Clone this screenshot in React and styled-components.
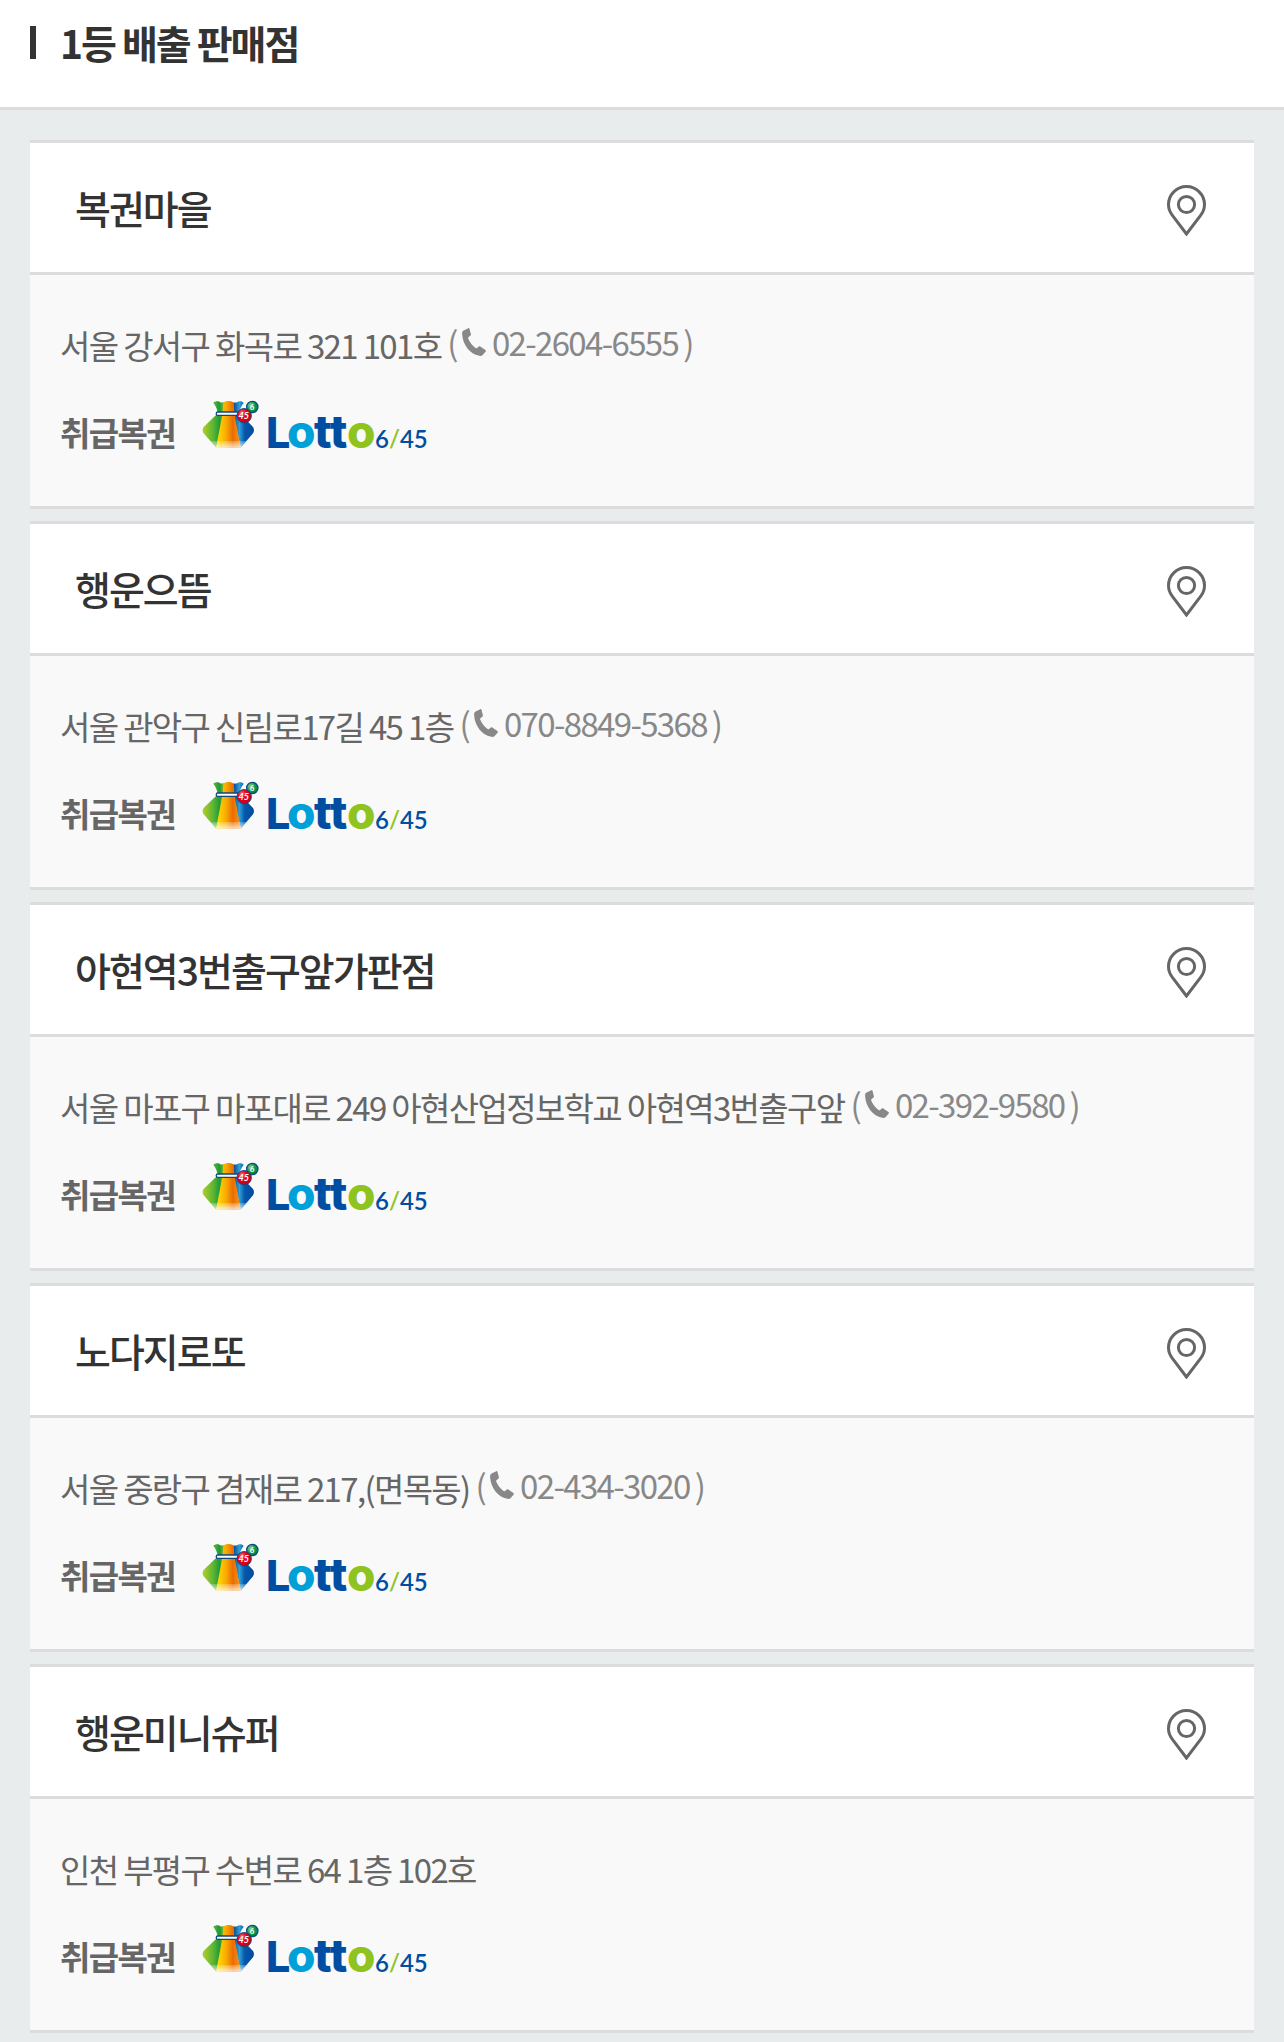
import React from "react";
import styled, { createGlobalStyle } from "styled-components";

const GlobalStyle = createGlobalStyle`
  *, *::before, *::after {
    box-sizing: border-box;
  }
  body {
    margin: 0;
    background: #e8eced;
    color: #666;
    font-family: "Noto Sans CJK KR", "Noto Sans", sans-serif;
    font-size: 33px;
  }
  h1, h2, p, dl, dt, dd, ul {
    margin: 0;
    padding: 0;
  }
  h1, h2, p, dt {
    letter-spacing: -0.05em;
  }
`;

const PageHeader = styled.header`
  padding: 20px 30px 42px;
  background: #fff;
  border-bottom: 3px solid #dcdcdc;
`;

const PageTitle = styled.h1`
  display: flex;
  align-items: center;
  gap: 24px;
  color: #333;
  font-size: 39px;
  font-weight: 700;
  line-height: 45px;

  &::before {
    content: "";
    width: 6px;
    height: 33px;
    background: #333;
  }
`;

const StoreList = styled.ul`
  display: flex;
  flex-direction: column;
  gap: 12px;
  padding: 30px 30px 9px;
  list-style: none;
`;

const StoreCard = styled.li`
  border: solid #dcdcdc;
  border-width: 3px 0;
  background: #f9f9f9;
`;

const StoreHeader = styled.div`
  display: flex;
  align-items: center;
  justify-content: space-between;
  padding: 36px 48px 36px 45px;
  background: #fff;
  border-bottom: 3px solid #dcdcdc;
`;

const StoreName = styled.h2`
  color: #333;
  font-size: 39px;
  font-weight: 500;
  line-height: 57px;
`;

const MapButton = styled.button`
  display: flex;
  padding: 6px 0 0;
  border: 0;
  background: none;
  cursor: pointer;
`;

const StoreBody = styled.div`
  display: flex;
  flex-direction: column;
  gap: 31px;
  padding: 46px 30px 54px;
`;

const Address = styled.p`
  display: flex;
  flex-wrap: wrap;
  gap: 6px;
  line-height: 48px;
`;

const Phone = styled.span`
  display: flex;
  align-items: center;
  gap: 5px;
  height: 42px;
  color: #888;
  line-height: 42px;
`;

const PhoneLink = styled.a`
  display: flex;
  align-items: center;
  gap: 6px;
  color: inherit;
  text-decoration: none;
`;

const Handling = styled.dl`
  display: flex;
  align-items: flex-end;
  gap: 27px;
`;

const HandlingLabel = styled.dt`
  font-weight: 700;
  line-height: 40px;
`;

const HandlingLogo = styled.dd`
  display: flex;
  padding-bottom: 3px;
`;

const LogoSvg = styled.svg`
  display: block;
  overflow: visible;
`;

const PinIcon = () => (
  <svg width="39" height="51" viewBox="0 0 39 51" fill="none" stroke="#666" strokeWidth="3" aria-hidden="true">
    <path d="M19.5 49 5.2 30.2C2.7 26.9 1.5 23.6 1.5 19.6a18 18 0 0 1 36 0c0 4-1.2 7.3-3.7 10.6Z" />
    <circle cx="19.5" cy="19.5" r="8.1" />
  </svg>
);

const PhoneIcon = () => (
  <svg width="24" height="28" viewBox="0 0 24 28" fill="#888" aria-hidden="true">
    <path d="M1.6 2.6 6.3.2c.6-.3 1 0 1.2.5l1.4 5.5c.2.6 0 1-.5 1.4L6.5 9.3c-.4.3-.5.8-.3 1.3 1.6 4 4 7 7.4 9.4.5.4 1 .4 1.4 0l1.8-1.5c.5-.4 1-.4 1.5-.1l5.1 3.6c.6.4.7.9.3 1.500l-3 3.400c-.9 1-2.200 1.200-3.500.9C7.900 26 .9 16.900.1 6.200 0 4.600.4 3.300 1.600 2.600Z" />
  </svg>
);

const LottoLogo = ({ id }) => (
  <LogoSvg width="224" height="49" viewBox="0 0 224 49" role="img" aria-label="Lotto 6/45">
    <defs>
      <linearGradient id={`${id}-green`} x1="0" x2="1">
        <stop offset="0.05" stopColor="#a8cc2c" />
        <stop offset="0.5" stopColor="#5db532" />
        <stop offset="0.8" stopColor="#1d9a3c" />
        <stop offset="1" stopColor="#8ab82c" />
      </linearGradient>
      <linearGradient id={`${id}-orange`} x1="0" x2="1">
        <stop offset="0.1" stopColor="#ffd500" />
        <stop offset="0.42" stopColor="#f9a800" />
        <stop offset="0.68" stopColor="#ea6c00" />
        <stop offset="1" stopColor="#f39a1c" />
      </linearGradient>
      <linearGradient id={`${id}-blue`} x1="0" x2="1">
        <stop offset="0" stopColor="#0a3f86" />
        <stop offset="0.3" stopColor="#2da0d8" />
        <stop offset="0.55" stopColor="#0557ab" />
        <stop offset="1" stopColor="#004a9c" />
      </linearGradient>
      <linearGradient id={`${id}-shine`} x1="0" x2="0" y1="0" y2="1">
        <stop offset="0" stopColor="#fff" stopOpacity="0.2" />
        <stop offset="1" stopColor="#fff" stopOpacity="0.75" />
      </linearGradient>
      <radialGradient id={`${id}-red`} cx="0.35" cy="0.3" r="0.75">
        <stop offset="0" stopColor="#f4776b" />
        <stop offset="0.4" stopColor="#e60020" />
        <stop offset="1" stopColor="#c4001a" />
      </radialGradient>
      <radialGradient id={`${id}-ball`} cx="0.35" cy="0.35" r="0.75">
        <stop offset="0" stopColor="#8fcf9b" />
        <stop offset="0.55" stopColor="#0a9848" />
        <stop offset="1" stopColor="#007a3d" />
      </radialGradient>
    </defs>
    <path fill={`url(#${id}-green)`} d="M11.3 2.8C13.5.7 16.8.8 18.6 2.6L22 2.3v11.5L14.3 47.7 1.6 33.2C.3 31.5.3 29 1.6 27L15.6 13.5C15.6 9.6 13.8 6.3 11.3 2.8Z" />
    <path fill={`url(#${id}-blue)`} d="M31.2 2.4 34.6 2.6C36.8.7 39.9.7 41.7 2.8 39 6.5 37.3 9.6 38 13.5L51 27c1.3 2 1.3 4.5 0 6.2L38.7 47.7 31.5 14Z" />
    <path fill={`url(#${id}-orange)`} d="M21.3 2.4C25 .5 28.2.6 31.5 2.4L32.5 14 38.7 47.7H14L20.5 14Z" />
    <path fill={`url(#${id}-shine)`} d="M8.3 41H44.7L38.7 47.7H14.2Z" />
    <rect x="14.2" y="12" width="25" height="3.4" rx="1.7" fill="#fff" stroke="#0a4a82" strokeWidth="1.3" />
    <circle cx="50.3" cy="7" r="5.7" fill={`url(#${id}-ball)`} stroke="#0a4a82" strokeWidth="1.2" />
    <circle cx="42.2" cy="15.7" r="7.2" fill={`url(#${id}-red)`} stroke="#0a4a82" strokeWidth="0.9" />
    <g fill="#fff" fontFamily="Lato, sans-serif" fontWeight="700" textAnchor="middle">
      <text x="50" y="10" fontSize="8">6</text>
      <text x="41.8" y="19" fontSize="9" fontStyle="italic">45</text>
    </g>
    <g fontFamily="Inter, sans-serif" fontWeight="800" fontSize="46">
      <text x="64" y="48" fontSize="43" fill="#004ea2">L</text>
      <text x="85" y="48" fill="#00a0d8">o</text>
      <text x="112" y="48" fill="#004ea2">tt</text>
      <text x="145" y="48" fill="#8fc31f">o</text>
    </g>
    <text x="173" y="48" fontFamily="Lato, sans-serif" fontWeight="600" fontSize="24" fill="#004ea2">
      6<tspan fill="#8fc31f">/</tspan>45
    </text>
  </LogoSvg>
);

const stores = [
  { name: "복권마을", address: "서울 강서구 화곡로 321 101호", phone: "02-2604-6555" },
  { name: "행운으뜸", address: "서울 관악구 신림로17길 45 1층", phone: "070-8849-5368" },
  { name: "아현역3번출구앞가판점", address: "서울 마포구 마포대로 249 아현산업정보학교 아현역3번출구앞", phone: "02-392-9580" },
  { name: "노다지로또", address: "서울 중랑구 겸재로 217,(면목동)", phone: "02-434-3020" },
  { name: "행운미니슈퍼", address: "인천 부평구 수변로 64 1층 102호" },
];

function Store({ store, id }) {
  return (
    <StoreCard>
      <StoreHeader>
        <StoreName>{store.name}</StoreName>
        <MapButton type="button" aria-label={`${store.name} 지도`}>
          <PinIcon />
        </MapButton>
      </StoreHeader>
      <StoreBody>
        <Address>
          <span>{store.address}</span>
          {store.phone && (
            <Phone>
              <span>(</span>
              <PhoneLink href={`tel:${store.phone}`}>
                <PhoneIcon />
                {store.phone}
              </PhoneLink>
              <span>)</span>
            </Phone>
          )}
        </Address>
        <Handling>
          <HandlingLabel>취급복권</HandlingLabel>
          <HandlingLogo>
            <LottoLogo id={id} />
          </HandlingLogo>
        </Handling>
      </StoreBody>
    </StoreCard>
  );
}

export default function App() {
  return (
    <>
      <GlobalStyle />
      <PageHeader>
        <PageTitle>1등 배출 판매점</PageTitle>
      </PageHeader>
      <main>
        <StoreList>
          {stores.map((store, index) => (
            <Store key={store.name} store={store} id={`lotto-${index}`} />
          ))}
        </StoreList>
      </main>
    </>
  );
}
